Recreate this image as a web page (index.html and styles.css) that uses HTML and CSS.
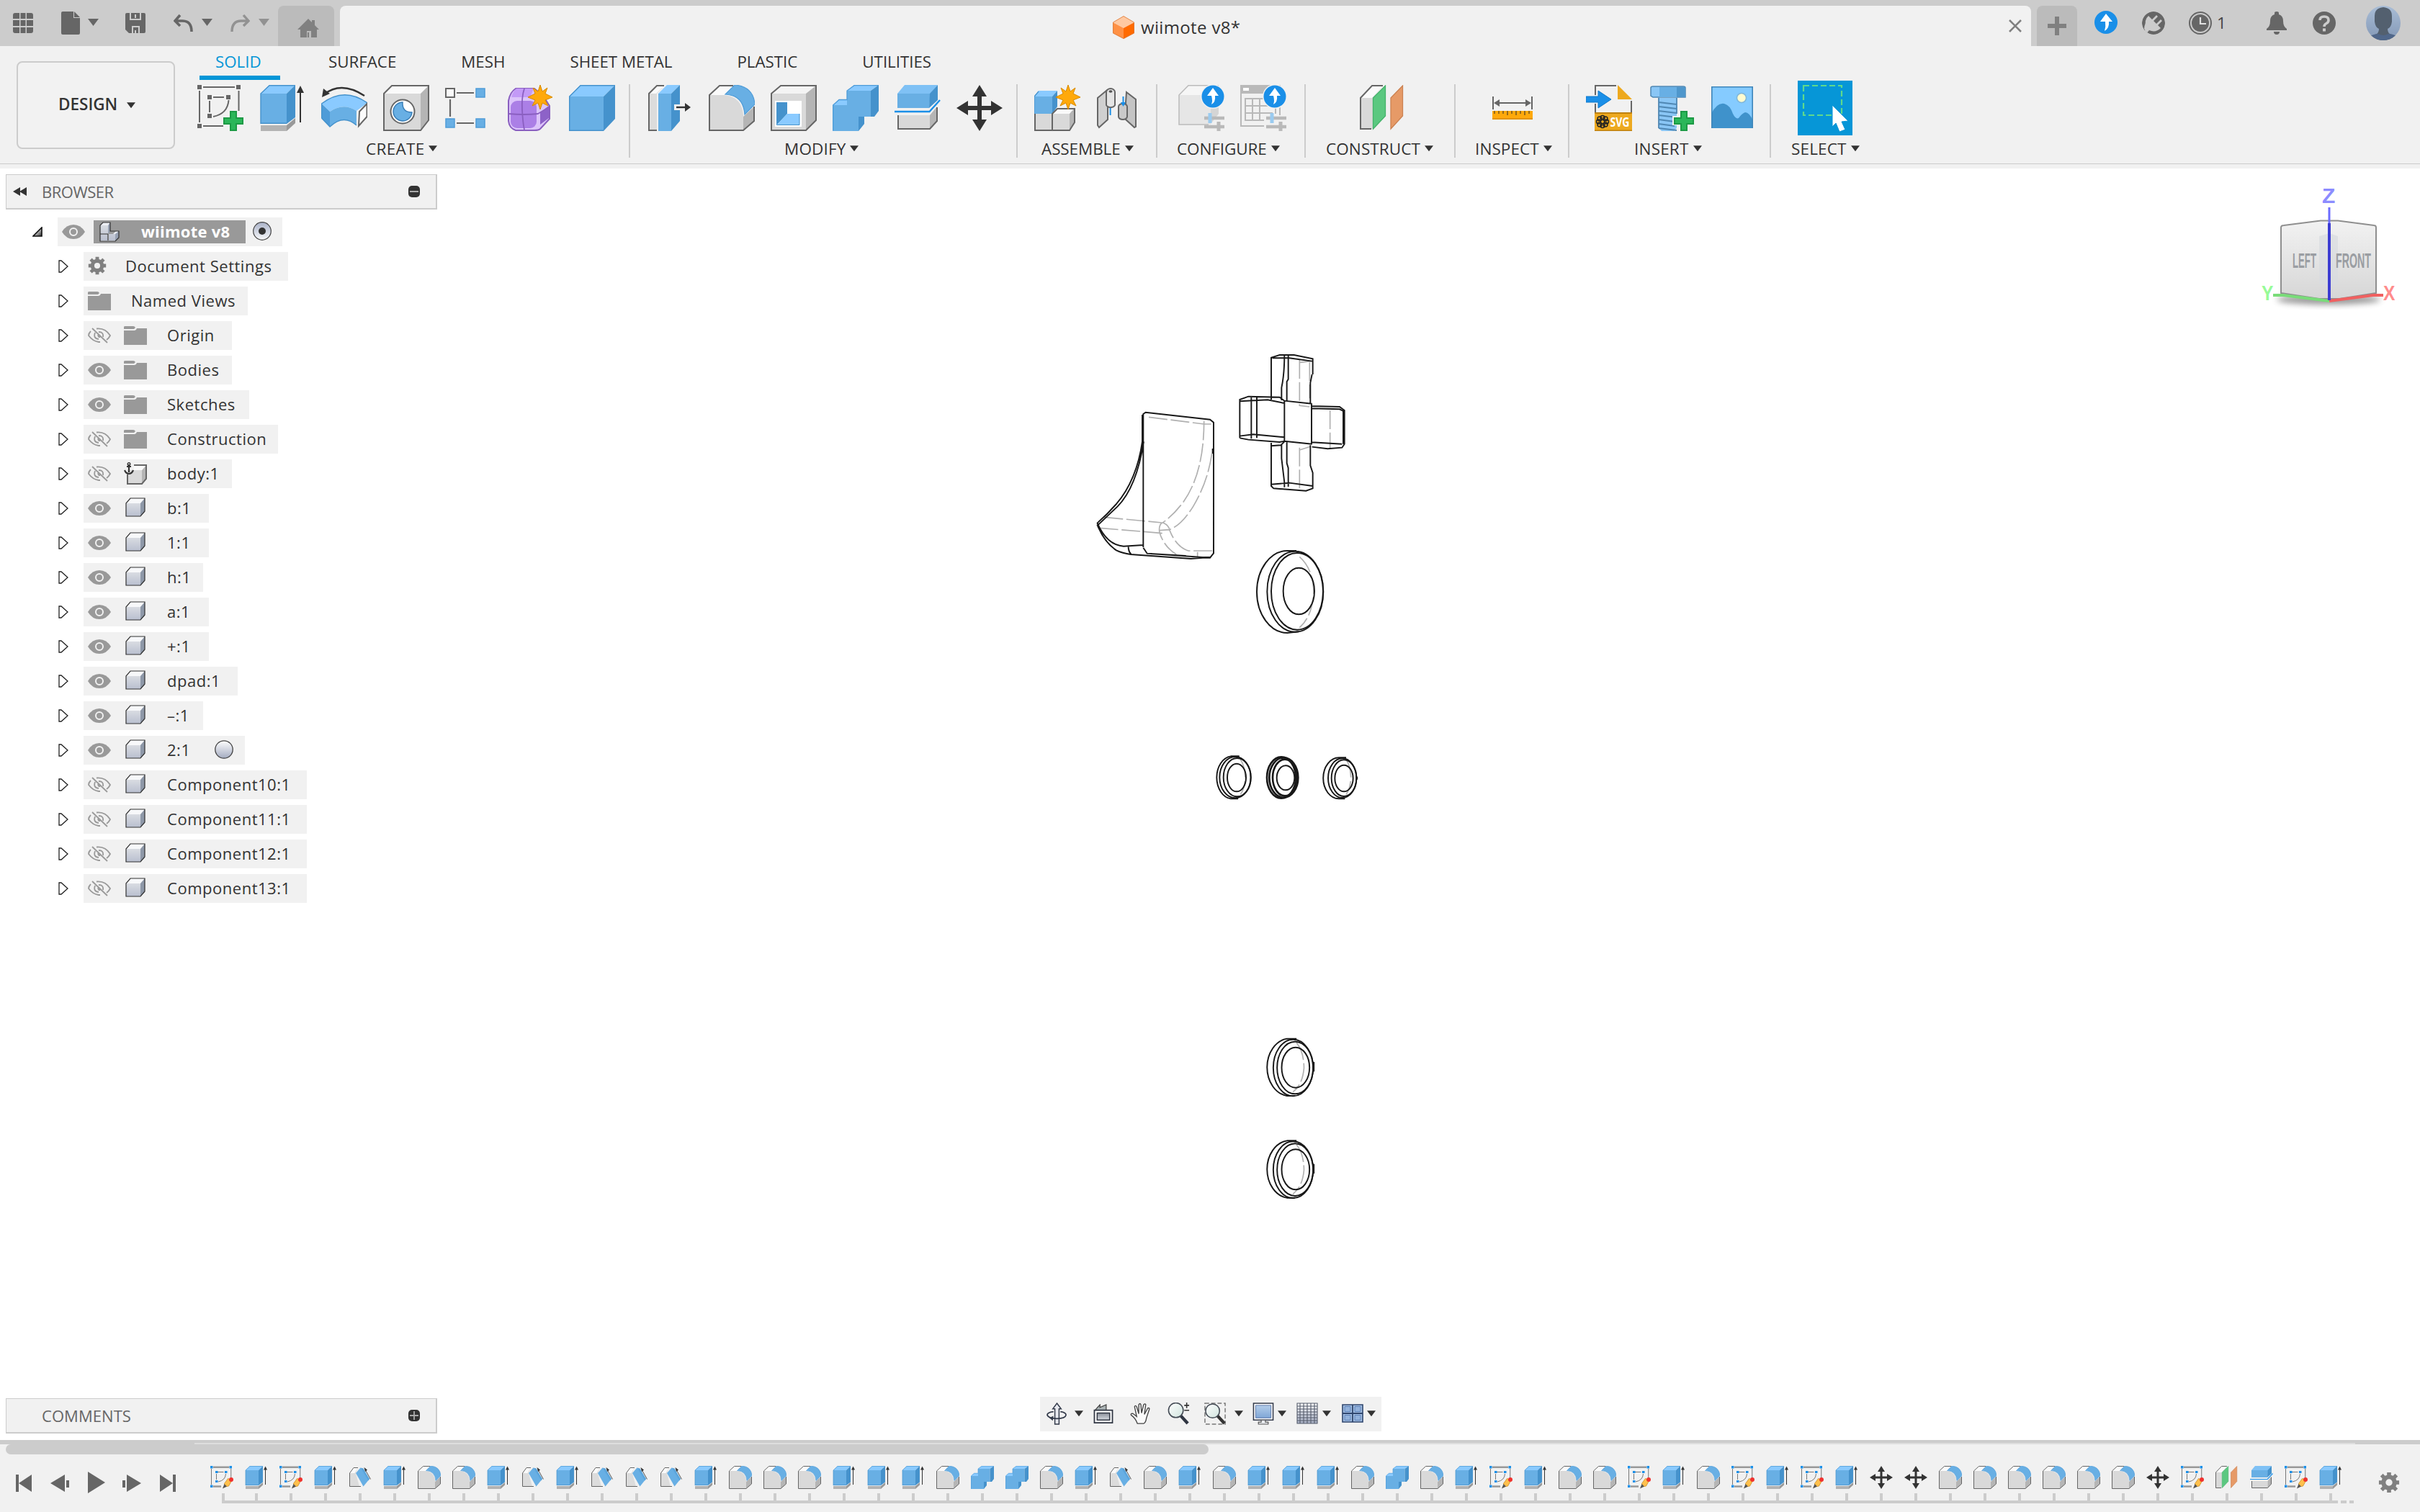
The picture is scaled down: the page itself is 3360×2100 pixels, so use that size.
FILE: index.html
```html
<!DOCTYPE html>
<html lang="en">
<head>
<meta charset="utf-8">
<title>wiimote v8*</title>
<link rel="stylesheet" href="styles.css">
</head>
<body>
<svg class="defs" aria-hidden="true">
  <defs>
    <linearGradient id="g-face" x1="0" y1="0" x2="0" y2="1"><stop offset="0" stop-color="#d9dce2"/><stop offset="1" stop-color="#b9bfcf"/></linearGradient>
    <linearGradient id="g-ball" x1="0" y1="0" x2="0" y2="1"><stop offset="0" stop-color="#fff"/><stop offset="1" stop-color="#a3abc0"/></linearGradient>
    <linearGradient id="g-ring" x1="0" y1="0" x2="0" y2="1"><stop offset="0" stop-color="#aab2c8"/><stop offset="1" stop-color="#f8f9fb"/></linearGradient>
    <linearGradient id="g-open" x1="0" y1="0" x2="1" y2="1"><stop offset="0.3" stop-color="#fff"/><stop offset="0.9" stop-color="#444"/></linearGradient>
    <linearGradient id="g-glass" x1="0" y1="0" x2="1" y2="1"><stop offset="0" stop-color="#fff"/><stop offset="1" stop-color="#cfe3dd"/></linearGradient>
    <linearGradient id="g-dark" x1="0" y1="0" x2="0" y2="1"><stop offset="0" stop-color="#8b909b"/><stop offset="1" stop-color="#d5d9e0"/></linearGradient>
    <linearGradient id="g-cube" x1="0" y1="0" x2="0" y2="1"><stop offset="0" stop-color="#f2f2f2"/><stop offset="1" stop-color="#d6d6d6"/></linearGradient>
    <linearGradient id="g-avatar" x1="0" y1="0" x2="0" y2="1"><stop offset="0" stop-color="#a9bdd6"/><stop offset="1" stop-color="#8398b6"/></linearGradient>
    <linearGradient id="g-screen" x1="0" y1="0" x2="0" y2="1"><stop offset="0" stop-color="#b4cdea"/><stop offset="1" stop-color="#7fa6d6"/></linearGradient>
    <filter id="soft" x="-20%" y="-50%" width="140%" height="200%"><feGaussianBlur stdDeviation="4"/></filter>
  </defs>

  <symbol id="i-star" viewBox="0 0 34 34"><path d="M17 0l3 9 7-5-3 8 10 5-10 4 4 8-8-4-3 9-3-9-8 4 4-8L0 17l10-5-3-8 7 5z" fill="#ffa90b" stroke="#d98a00"/></symbol>
  <symbol id="i-plus" viewBox="0 0 28 28"><path d="M10 1h8v9h9v8h-9v9h-8v-9H1v-8h9z" fill="#2bb659" stroke="#1c9a45" stroke-width="2"/></symbol>

  <symbol id="i-newsketch" viewBox="0 0 64 64">
    <path d="M0 0h6v6H0zM54 0h6v6h-6zM0 54h6v6H0zM14 14h6v6h-6zM40 14h6v6h-6zM14 40h6v6h-6z" fill="#666"/>
    <path d="M8 3h44M3 8v44M57.500 8v28M8 57h28M22 17h15M17 22v16M43.500 21Q42 40 22 44" fill="none" stroke="#666" stroke-width="2"/>
    <use href="#i-plus" x="36" y="36" width="28" height="28"/>
  </symbol>
  <symbol id="i-s" viewBox="0 0 64 64">
    <path d="M8 3.500h44M8 57h22" stroke="#999" stroke-width="5"/>
    <path d="M3 8v44M57.500 8v26M19 17h18M17 22v16M43 22Q42 40 22 44" fill="none" stroke="#777" stroke-width="2"/>
    <path d="M0 0h7v7H0zM53 0h7v7h-7zM0 53h7v7H0zM14 14h7v6h-7zM40 14h7v6h-7zM14 40h7v6h-7z" fill="#1a8fe8"/>
    <path d="M39 49l10-14 11 5-9 16-11 2z" fill="#ffc04d" stroke="#c98a1c" stroke-width="1.500"/>
    <path d="M39 50l7 7-12 6z" fill="#555"/><circle cx="58" cy="38" r="6" fill="#f0322e"/>
  </symbol>
  <symbol id="i-e" viewBox="0 0 64 64">
    <path d="M2 12L14 0h36L38 12z" fill="#8acaff"/><path d="M2 12h36v42H2z" fill="#68afe4"/><path d="M38 12L50 0v45L38 54z" fill="#4592cc"/>
    <path d="M2 54V12L14 .800h36M2 53.300h36" fill="none" stroke="#4592cc" stroke-width="1.400"/>
    <path d="M2 56h36v8H2z" fill="#b3b3b3"/><path d="M38 56l12-10v7L38 64z" fill="#999"/>
    <path d="M57 8v44" stroke="#333" stroke-width="2"/><path d="M57 1l5 10H52z" fill="#333"/>
  </symbol>
  <symbol id="i-revolve" viewBox="0 0 64 64">
    <path d="M4 13Q28-6 60 15" fill="none" stroke="#333" stroke-width="2.500"/><path d="M1 17l2-12 9 7z" fill="#333"/>
    <path d="M.500 26Q32 2 64 25L49 36Q31 24 12 37z" fill="#8acaff"/><path d="M.500 26L12 37v21L.500 46z" fill="#4f9cd8"/><path d="M12 37Q31 24 49 36v20Q31 40 12 58z" fill="#68afe4"/>
    <path d="M.500 46V26Q32 2 64 25M.500 46L12 58Q31 40 49 56" fill="none" stroke="#4592cc" stroke-width="1.500"/>
    <path d="M63.500 26v18L52 57l1-20z" fill="#fafafa" stroke="#666" stroke-width="2"/>
  </symbol>
  <symbol id="i-hole" viewBox="0 0 64 64">
    <path d="M1 12L12 1h51L52 12z" fill="#fafafa"/><path d="M1 12h51v51H1z" fill="#d9d9d9"/><path d="M52 12L63 1v48L52 63z" fill="#b5b5b5"/>
    <path d="M1 63V12L12 1h51v48L52 63z" fill="none" stroke="#666" stroke-width="2"/>
    <circle cx="27" cy="37" r="16.500" fill="#fff" stroke="#666" stroke-width="2"/>
    <path d="M27 24Q26 38 40 38A13 13 0 1 1 27 24z" fill="#68afe4" stroke="#3a7fb8" stroke-width="1.500"/>
  </symbol>
  <symbol id="i-pattern" viewBox="0 0 64 64">
    <path d="M1 5h12v12H1z" fill="#fafafa" stroke="#666" stroke-width="2"/>
    <path d="M43 5h12v12H43zM1 47h12v12H1zM43 47h12v12H43z" fill="#68afe4" stroke="#4f9cd8" stroke-width="1.500"/>
    <path d="M16 11h24M7 20v24M16 53h24" stroke="#666" stroke-width="2.200"/>
  </symbol>
  <symbol id="i-form" viewBox="0 0 64 64">
    <path d="M12 5h26l12 10 9 14v18L46 61q-2 2-8 2H12Q3 60 2 50V22Q4 10 12 5z" fill="#dcc4fa" stroke="#8a5fc0" stroke-width="2"/>
    <path d="M13 5h24l-5 12H6Q8 9 13 5z" fill="#c39af7"/><rect x="5" y="22" width="36" height="38" rx="9" fill="#ab7fe6"/><path d="M46 38l12-9v17L46 55z" fill="#8d62c8"/>
    <path d="M24 5q-4 12-3 30t3 27M2 40q22 2 41 0l15-9" fill="none" stroke="#8a5fc0" stroke-width="1.800"/>
    <use href="#i-star" x="29" y="0" width="34" height="34"/>
  </symbol>
  <symbol id="i-box" viewBox="0 0 64 64">
    <path d="M0 16L16 0h48L48 16z" fill="#8acaff"/><path d="M0 16h48v48H0z" fill="#68afe4"/><path d="M48 16L64 0v47L48 64z" fill="#4592cc"/>
    <path d="M.700 63.300V16L16 .700h48M0 63.300h48" fill="none" stroke="#4592cc" stroke-width="1.400"/>
  </symbol>
  <symbol id="i-presspull" viewBox="0 0 64 64">
    <path d="M3 12L14 1h10L14 12v51H3z" fill="#dcdcdc"/><path d="M3 12L14 1h10L13 12z" fill="#fafafa"/><path d="M14 63H3V12L14 1h10" fill="none" stroke="#666" stroke-width="2"/>
    <path d="M16 12L28 0h18L34 12z" fill="#8acaff"/><path d="M16 12h18v52H16z" fill="#68afe4"/><path d="M34 12L46 0v50L34 64z" fill="#4592cc"/>
    <path d="M38 31h14" stroke="#f1f1f1" stroke-width="8"/><path d="M41 31h14" stroke="#333" stroke-width="2.400"/><path d="M53 25l8 6-8 6z" fill="#333"/>
  </symbol>
  <symbol id="i-f" viewBox="0 0 64 64">
    <path d="M1 14L15 1h20L22 14z" fill="#fafafa"/><path d="M1 14h20Q46 16 48 42v21H1z" fill="#d9d9d9"/><path d="M48 44l15-14v20L48 63z" fill="#b5b5b5"/>
    <path d="M34 1H15L1 14v49h47l15-13V30" fill="none" stroke="#666" stroke-width="2"/>
    <path d="M23 13L36 0Q62 2 64 27L50 41Q48 14 23 13z" fill="#68afe4" stroke="#4f9cd8" stroke-width="1.200"/>
  </symbol>
  <symbol id="i-shell" viewBox="0 0 64 64">
    <path d="M1 12L14 1h49L49 12z" fill="#f4f4f4"/><path d="M1 12h48v51H1z" fill="#d9d9d9"/><path d="M49 12L63 1v48L49 63z" fill="#b5b5b5"/>
    <path d="M1 63V12L14 1h49v48L49 63z" fill="none" stroke="#666" stroke-width="2"/>
    <path d="M6 22h37v36H6z" fill="#fff"/><path d="M8 24h15v16L8 56z" fill="#4592cc"/><path d="M8 56l15-16h17v16z" fill="#8acaff"/><path d="M8.500 24v31.500H40V40" fill="none" stroke="#4592cc"/>
  </symbol>
  <symbol id="i-c" viewBox="0 0 64 64">
    <path d="M0 28h20V8h33v36H36v20H0z" fill="#68afe4"/><path d="M0 28l9-8h11v8zM20 8l10-8h34L53 8z" fill="#8acaff"/>
    <path d="M53 8L64 0v36l-6 8H44v10l-8 10V44h17z" fill="#4592cc"/><path d="M.700 63.300V28L9 20.500h11V8L30 .700h34" fill="none" stroke="#4f9cd8" stroke-width="1.300"/>
  </symbol>
  <symbol id="i-split" viewBox="0 0 64 64">
    <path d="M4 12L14 0h46L50 12z" fill="#7fc1f5"/><path d="M4 12h46L48 32H4z" fill="#68afe4"/><path d="M49 12L60 0v21L48 32z" fill="#4592cc"/>
    <path d="M0 37h48.500L63 21" fill="none" stroke="#1a8fe8" stroke-width="2.400"/>
    <path d="M5 42h44v19H5z" fill="#d9d9d9"/><path d="M49 42l10-12v19L49 61z" fill="#b5b5b5"/><path d="M5 42v19h44l10-11V31" fill="none" stroke="#666" stroke-width="2"/>
  </symbol>
  <symbol id="i-m" viewBox="0 0 64 64"><path d="M32 0l10 16h-7v13h13v-7l16 10-16 10v-7H35v13h7L32 64 22 48h7V35H16v7L0 32l16-10v7h13V16h-7z" fill="#333"/></symbol>
  <symbol id="i-component" viewBox="0 0 64 64">
    <path d="M0 16l6-8h26l-7 8z" fill="#8acaff"/><path d="M0 16h25v24H0z" fill="#68afe4"/><path d="M25 16l7-8v22l-7 10z" fill="#4592cc"/>
    <path d="M1 40h24v23H1zM25 40h24v23H25z" fill="#d9d9d9"/><path d="M25 40l7-8h24l-7 8z" fill="#fafafa"/><path d="M49 40l7-8v20l-7 11z" fill="#b5b5b5"/>
    <path d="M1 40v23h48l7-11V33H32l-7 7v23" fill="none" stroke="#666" stroke-width="2"/><path d="M0 40V16l6-7" fill="none" stroke="#4592cc" stroke-width="1.300"/>
    <use href="#i-star" x="30" y="0" width="34" height="34"/>
  </symbol>
  <symbol id="i-joint" viewBox="0 0 64 64">
    <path d="M14 8L2 18v38l2 3 12-11V24z" fill="#d0d0d0" stroke="#666" stroke-width="2"/><path d="M42 10l13 10v38l-2 1-12-11V24z" fill="#c4c4c4" stroke="#666" stroke-width="2"/>
    <path d="M14 10a6 5 0 0 1 12 0v16a6 4 0 0 1-12 2z" fill="#e4e4e4" stroke="#666" stroke-width="2"/><ellipse cx="20" cy="9" rx="2.500" ry="1.800" fill="#555"/>
    <path d="M31 30a6 4 0 0 1 12 0v14a6 4 0 0 1-12 0z" fill="#c9c9c9" stroke="#666" stroke-width="2"/>
    <path d="M19.600 32v10M37.500 16v12" stroke="#1a8fe8" stroke-width="2"/><path d="M34 24h7l-3.500 6z" fill="#1a8fe8"/>
  </symbol>
  <symbol id="i-config" viewBox="0 0 64 64">
    <path d="M36 46h28M36 58h28" stroke="#b9b9b9" stroke-width="4.500"/><path d="M56 51v13" stroke="#b9b9b9" stroke-width="5"/><path d="M44 39v14" stroke="#9acbf0" stroke-width="5"/>
    <circle cx="48" cy="16" r="17" fill="#f1f1f1"/><circle cx="48" cy="16" r="15.500" fill="#1a8fe8"/><path d="M48 4l8 11h-5q1 9-5 12 2-5 0-12h-6z" fill="#fff"/>
  </symbol>
  <symbol id="i-confdesign" viewBox="0 0 64 64">
    <path d="M1 14L14 1h42L46 14z" fill="#f6f6f6"/><path d="M1 14h44v41H1z" fill="#e6e6e6"/><path d="M45 14L56 2v38L45 54z" fill="#d5d5d5"/><path d="M42 55H1V14L14 .700h42" fill="none" stroke="#bbb" stroke-width="1.500"/>
    <use href="#i-config" width="64" height="64"/>
  </symbol>
  <symbol id="i-conftable" viewBox="0 0 64 64">
    <path d="M0 0h56v12H0z" fill="#b9b9b9"/><path d="M4 4h8v4H4z" fill="#fff"/><path d="M1 8v49h32M55 30v12" fill="none" stroke="#b9b9b9" stroke-width="2"/>
    <path d="M7 19h42M7 29h42M7 39h38M7 49h26M7 18v32M17 18v32M27 18v32M49 30v10" fill="none" stroke="#b9b9b9" stroke-width="2"/>
    <use href="#i-config" width="64" height="64"/>
  </symbol>
  <symbol id="i-p" viewBox="0 0 64 64">
    <path d="M1 18L17 1h15L18 18v43H1z" fill="#d9d9d9"/><path d="M1 18L17 1h15L17 18z" fill="#fafafa"/><path d="M16 61H1V18L17 1h15" fill="none" stroke="#666" stroke-width="2"/>
    <path d="M18.500 18L35.500 1v42L18.500 61z" fill="#5bc880" stroke="#44b36b" stroke-width="1.300"/><path d="M43 18L59.500 1v42L43 61z" fill="#e69a67" stroke="#cc8150" stroke-width="1.300"/>
  </symbol>
  <symbol id="i-measure" viewBox="0 0 64 64">
    <path d="M5 16v18M59 16v18M8 25h48" stroke="#666" stroke-width="2"/><path d="M6 25l8-5v10zM58 25l-8-5v10z" fill="#666"/>
    <path d="M4 36h56v12H4z" fill="#ffa90b"/><path d="M4 47h56" stroke="#e29300" stroke-width="2"/><path d="M7 36v4M13 36v4M19 36v4M25 36v6M31 36v4M37 36v6M43 36v4M49 36v6M55 36v4" stroke="#7a5a1e" stroke-width="1.600"/>
  </symbol>
  <symbol id="i-screw" viewBox="0 0 64 64">
    <path d="M15 18h25v42l-4 4H19l-4-4z" fill="#8ac6f5"/><path d="M4 4q0-2 3-2h42q3 0 3 2v13H7l-3-2z" fill="#8ac6f5" stroke="#4f87b3" stroke-width="1.500"/><path d="M16 3h24v14H16z" fill="#68afe4"/><path d="M40 3h12v14H40z" fill="#4f97cc"/>
    <path d="M15 24l25 3M15 30l25 3M15 36l25 3M15 42l25 3M15 48l22 3M15 54l22 3M15 60l25 3M15 18v42M40 18v22" stroke="#4f87b3" stroke-width="1.800"/>
    <path d="M34 43h10v-9h12v9h8v13h-8v8H44v-8H34z" fill="#f1f1f1"/><use href="#i-plus" x="36" y="36" width="28" height="28"/>
  </symbol>
  <symbol id="i-image" viewBox="0 0 64 64">
    <path d="M2 2h58v58H2z" fill="#85cbff"/><path d="M2 40q8-16 18-14 8 2 12 14 4 8 8 6 4-6 9-8 6 0 11 12v10H2z" fill="#3f92cb"/><circle cx="44" cy="18" r="6.500" fill="#fffbd0" stroke="#7fb6d8" stroke-width="1.500"/>
    <path d="M2.800 60V2.800h56.400V60" fill="none" stroke="#3f86ba" stroke-width="1.600"/>
  </symbol>
  <symbol id="i-select" viewBox="0 0 76 76">
    <path d="M0 0h76v76H0z" fill="#0696d7"/><path d="M8 7h53v41H8z" fill="none" stroke="#5fd98c" stroke-width="2.200" stroke-dasharray="8 4"/>
    <path d="M48 34l22 22-9 1 5 11-8 3-5-12-5 5z" fill="#fff" stroke="#0696d7"/>
  </symbol>
  <symbol id="i-d" viewBox="0 0 64 64">
    <path d="M3 20L14 5h10l-4 16 10 36H3z" fill="#dcdcdc"/><path d="M3 20L14 5h11l-8 15z" fill="#fafafa"/><path d="M34 57H3V20L14 5h12" fill="none" stroke="#666" stroke-width="2"/>
    <path d="M20 20L33 5l25 31-17 21z" fill="#68afe4"/><path d="M33 5l8 2 17 29-3 5z" fill="#5aa5dd"/>
    <path d="M47 12l14 25" stroke="#444" stroke-width="1.800"/><path d="M43 4l9 7-6 5z" fill="#333"/>
  </symbol>

  <symbol id="i-gear" viewBox="0 0 32 32"><path fill-rule="evenodd" d="M13 1h6v4l3 1 3-3 4 4-3 3 1 3h4v6h-4l-1 3 3 3-4 4-3-3-3 1v4h-6v-4l-3-1-3 3-4-4 3-3-1-3H1v-6h4l1-3-3-3 4-4 3 3 3-1zM16 11a5 5 0 1 0 0 10 5 5 0 0 0 0-10z" fill="#808080"/></symbol>
  <symbol id="i-eye" viewBox="0 0 32 20"><path d="M0 10Q6 0 16 0t16 10Q26 20 16 20T0 10z" fill="#999"/><circle cx="16" cy="10" r="5" fill="#999" stroke="#f1f1f1" stroke-width="2"/></symbol>
  <symbol id="i-eyeoff" viewBox="0 0 32 22"><g fill="none" stroke="#999" stroke-width="1.800"><path d="M4 5Q1 8 1 11q6 8 14 9h2M12 1.500Q24 0 31 11q-2 4-5 6M6 1l21 20M10 7q-3 8 5 9M15 6q7 0 6 7M14 10q1 4 3 3"/></g></symbol>
  <symbol id="i-folder" viewBox="0 0 32 26"><path d="M0 1q0-1 2-1h11q2 0 3 2l-2 2H0zM0 6h15q2 0 3-3h14v23H0z" fill="#999"/></symbol>
  <symbol id="i-cube" viewBox="0 0 28 28"><path d="M1 8L7 1h20l-6 7z" fill="#f7f8fa"/><path d="M1 8h20v18H1z" fill="url(#g-face)"/><path d="M21 8l6-7v19l-6 6z" fill="#8e98a8"/><path d="M1 26V8L7 1h20v18l-6 7z" fill="none" stroke="#333" stroke-width="1.200"/></symbol>
  <symbol id="i-anchorcube" viewBox="0 0 32 32"><path d="M5 11h20v19H5z" fill="#d9d9d9"/><path d="M25 11l6-7v19l-6 7z" fill="#b5b5b5"/><path d="M14 4h17l-6 7H14z" fill="#fafafa"/><path d="M5 17v13h20l6-7V4H14" fill="none" stroke="#666" stroke-width="2"/><path d="M7 3v11M4 6h6M1 11q2 5 6 5t6-5" fill="none" stroke="#333" stroke-width="2.200"/><circle cx="7" cy="2.500" r="1.800" fill="none" stroke="#333" stroke-width="1.400"/></symbol>
  <symbol id="i-assembly" viewBox="0 0 28 28"><path d="M1 5l4-4h10l-2 4v12h6l4-4h4v9l-5 5H1z" fill="#eef0f5"/><path d="M1 5h11v21H1zM13 17h9v9h-9z" fill="url(#g-face)"/><path d="M12 5l3-4v12l-3 4zM22 17l5-4v9l-5 5z" fill="#98a2b4"/><path d="M1 27V5l4-4h10v12h12v9l-5 5zM1 17h11v9" fill="none" stroke="#333" stroke-width="1.200"/></symbol>
  <symbol id="i-caret" viewBox="0 0 12 8"><path d="M0 0h12L6 8z" fill="currentColor"/></symbol>
  <symbol id="i-expand" viewBox="0 0 14 18"><path d="M1 1h3l9 8-9 8H1z" fill="#fff" stroke="#222" stroke-width="1.300"/></symbol>
  <symbol id="i-up" viewBox="0 0 32 32"><circle cx="16" cy="16" r="16" fill="#1a8fe8"/><path d="M16 4l9 11h-5q1 9-6 13 2-6 1-13H8z" fill="#fff"/></symbol>
</svg>

<header class="titlebar">
  <svg class="tb-apps" viewBox="0 0 28 28"><path d="M0 3q0-3 3-3h6v8H0zM10.500 0h7v8h-7zM19 0h6q3 0 3 3v5h-9zM0 10h9v8H0zM10.500 10h7v8h-7zM19 10h9v8h-9zM0 20h9v8H3q-3 0-3-3zM10.500 20h7v8h-7zM19 20h9v5q0 3-3 3h-6z" fill="#666"/></svg>
  <svg class="tb-doc" viewBox="0 0 26 32"><path d="M0 2q0-2 2-2h15v9h9v21q0 2-2 2H2q-2 0-2-2zM18 0l8 8h-8z" fill="#666"/></svg>
  <svg class="tb-caret"><use href="#i-caret"/></svg>
  <svg class="tb-save" viewBox="0 0 28 28"><path fill-rule="evenodd" d="M2 0h4v10h16V0h4q2 0 2 2v24q0 2-2 2h-6v-10H9v10H5l-5-5V2q0-2 2-2zM8 0h12v8H8zM13 2v5h2V2zM11 20h7v8h-3v-4h-2v4h-2z" fill="#666"/></svg>
  <svg class="tb-undo" viewBox="0 0 28 26"><path d="M9 2L2 10l7 7M2 10h10q13 0 13 15" fill="none" stroke="#666" stroke-width="3.600"/></svg>
  <svg class="tb-caret"><use href="#i-caret"/></svg>
  <svg class="tb-redo" viewBox="0 0 28 26"><path d="M19 2l7 8-7 7M26 10H16Q3 10 3 25" fill="none" stroke="#929292" stroke-width="3.400"/></svg>
  <svg class="tb-caret dim"><use href="#i-caret"/></svg>
  <div class="tab home"><svg viewBox="0 0 30 26"><path d="M15 0l5 5V2h4v7l6 6h-3v11h-8v-9h-6v9H4V15H0zM14 19h2v7h-2z" fill="#808080"/></svg></div>
  <div class="tab doc">
    <svg class="doc-icon" viewBox="0 0 30 32"><path d="M15 0l15 9-15 8L0 9z" fill="#ffc9a1"/><path d="M0 9l15 8v15L0 24z" fill="#ff9145"/><path d="M30 9l-15 8v15l15-8z" fill="#ff6a00"/><path d="M15 .500l14.500 8.500v15L15 31.500.500 24V9z" fill="none" stroke="#d9783a" stroke-width=".8"/></svg>
    <span>wiimote v8*</span>
    <svg class="close" viewBox="0 0 18 18"><path d="M1 1l16 16M17 1L1 17" stroke="#808080" stroke-width="2.600"/></svg>
  </div>
  <div class="tab add"><svg viewBox="0 0 26 26"><path d="M13 0v26M0 13h26" stroke="#808080" stroke-width="6"/></svg></div>
  <svg class="tb-up"><use href="#i-up"/></svg>
  <svg class="tb-plug" viewBox="0 0 32 32"><circle cx="16" cy="16" r="16" fill="#666"/><path d="M0 32l6-9Q2 12 9 6l5 5 6-6 2 2-6 6 4 4 6-6 2 2-6 6 4 4q-7 7-16 3l-5 6z" fill="#ccc"/><path d="M3 24q1-12 8-10l9 8q-4 6-11 2l-3 4z" fill="#ccc"/></svg>
  <svg class="tb-clock" viewBox="0 0 32 32"><circle cx="16" cy="16" r="15" fill="none" stroke="#666" stroke-width="2"/><circle cx="16" cy="16" r="12" fill="#666"/><path d="M16 8v9h8" fill="none" stroke="#e0e0e0" stroke-width="2.200"/></svg>
  <span class="jobs">1</span>
  <svg class="tb-bell" viewBox="0 0 28 32"><path d="M11 2q0-2 3-2t3 2v2q6 2 6 9 0 8 5 11v2H0v-2q5-3 5-11 0-7 6-9zM10 28h8q0 4-4 4t-4-4z" fill="#666"/></svg>
  <svg class="tb-help" viewBox="0 0 32 32"><circle cx="16" cy="16" r="16" fill="#666"/><path d="M10 12q0-5 6-5t6 5q0 3-3 4.500t-3 4.500" fill="none" stroke="#ccc" stroke-width="3.600"/><path d="M14 23.500h4v4h-4z" fill="#ccc"/></svg>
  <svg class="tb-avatar" viewBox="0 0 48 48"><clipPath id="av"><circle cx="24" cy="24" r="24"/></clipPath><g clip-path="url(#av)"><path d="M0 0h48v48H0z" fill="url(#g-avatar)"/><path d="M12 14q0-11 12-12 12 1 12 12v8q-1 8-6 10 0 7 6 8l12 4v4H0v-4l12-4q6-1 6-8-5-2-6-10z" fill="#53606f"/><path d="M5 42q8-3 12-3 7 4 14 0 5 0 12 3v6H5z" fill="#50678a"/></g></svg>
</header>

<section class="ribbon">
  <button class="workspace">DESIGN<svg class="caret"><use href="#i-caret"/></svg></button>
  <div class="ribbon-main">
    <nav class="ribbon-tabs">
      <span class="rt active">SOLID</span><span class="rt">SURFACE</span><span class="rt">MESH</span><span class="rt">SHEET METAL</span><span class="rt">PLASTIC</span><span class="rt">UTILITIES</span>
    </nav>
    <div class="groups">
      <div class="group g-create">
        <div class="icons"><svg><use href="#i-newsketch"/></svg><svg><use href="#i-e"/></svg><svg><use href="#i-revolve"/></svg><svg><use href="#i-hole"/></svg><svg><use href="#i-pattern"/></svg><svg><use href="#i-form"/></svg><svg><use href="#i-box"/></svg></div>
        <div class="label">CREATE<svg class="caret"><use href="#i-caret"/></svg></div>
      </div>
      <div class="group g-modify">
        <div class="icons"><svg><use href="#i-presspull"/></svg><svg><use href="#i-f"/></svg><svg><use href="#i-shell"/></svg><svg><use href="#i-c"/></svg><svg><use href="#i-split"/></svg><svg><use href="#i-m"/></svg></div>
        <div class="label">MODIFY<svg class="caret"><use href="#i-caret"/></svg></div>
      </div>
      <div class="group g-assemble">
        <div class="icons"><svg><use href="#i-component"/></svg><svg><use href="#i-joint"/></svg></div>
        <div class="label">ASSEMBLE<svg class="caret"><use href="#i-caret"/></svg></div>
      </div>
      <div class="group g-configure">
        <div class="icons"><svg><use href="#i-confdesign"/></svg><svg><use href="#i-conftable"/></svg></div>
        <div class="label">CONFIGURE<svg class="caret"><use href="#i-caret"/></svg></div>
      </div>
      <div class="group g-construct">
        <div class="icons"><svg><use href="#i-p"/></svg></div>
        <div class="label">CONSTRUCT<svg class="caret"><use href="#i-caret"/></svg></div>
      </div>
      <div class="group g-inspect">
        <div class="icons"><svg><use href="#i-measure"/></svg></div>
        <div class="label">INSPECT<svg class="caret"><use href="#i-caret"/></svg></div>
      </div>
      <div class="group g-insert">
        <div class="icons">
          <svg viewBox="0 0 64 64">
            <path d="M13 14V1h29M13 26v13M63 22v17" fill="none" stroke="#666" stroke-width="2"/><path d="M44 0l20 20H44z" fill="#eda91f"/>
            <path d="M0 16h17V8l18 12-18 12v-8H0z" fill="#1a8fe8" stroke="#0f78c9"/>
            <path d="M12 38h52v26H12z" fill="#eda91f"/><path d="M12 39h52M12 63.300h52" stroke="#bf8210" stroke-width="1.800"/>
            <g fill="none" stroke="#222" stroke-width="1.500"><circle cx="23" cy="45.500" r="3"/><circle cx="23" cy="56.500" r="3"/><circle cx="17.500" cy="51" r="3"/><circle cx="28.500" cy="51" r="3"/><circle cx="19" cy="47" r="3"/><circle cx="27" cy="47" r="3"/><circle cx="19" cy="55" r="3"/><circle cx="27" cy="55" r="3"/></g>
            <text class="filetype" transform="translate(33.500 57.700) scale(.78 1)">SVG</text>
          </svg>
          <svg><use href="#i-screw"/></svg><svg><use href="#i-image"/></svg></div>
        <div class="label">INSERT<svg class="caret"><use href="#i-caret"/></svg></div>
      </div>
      <div class="group g-select">
        <div class="icons"><svg class="big"><use href="#i-select"/></svg></div>
        <div class="label">SELECT<svg class="caret"><use href="#i-caret"/></svg></div>
      </div>
    </div>
  </div>
</section>

<main class="workarea">
  <svg class="scene" viewBox="0 234 3360 1766">
    <g class="wire" transform="translate(1500 470) scale(.33333)">
      <g class="hidden-edge">
        <path d="M285 328L515 357H550M515 345Q515 560 430 680 390 735 340 770M548 480Q530 600 470 700 420 780 370 797L330 800M100 745L340 768M80 790L345 812M340 768Q325 780 330 810 350 870 400 900M345 768Q370 780 372 800 400 870 450 885H550M488 890V912"/>
        <path d="M913 90V280L955 285M1040 300V460M913 455V635M915 100L960 95M913 465L960 450M955 100V250"/>
        <path d="M913 910Q970 960 972 1060 965 1160 913 1205"/>
      </g>
      <path d="M262 870V315L272 308 540 338 555 350V895L540 914 278 896 262 872M258 318V430Q235 590 150 690 110 735 70 770M264 430Q234 620 155 700L76 775M70 768Q110 862 180 866L262 861M70 776Q100 850 150 883 175 895 210 900L460 918 540 912M200 866Q200 890 212 900M290 897L440 906M551 459V480"/>
      <path d="M795 255V80L830 69H890L968 85V150M850 69Q850 150 838 205V258M866 69V170L860 180V262M800 82L870 82 965 95M965 150L958 185V272M664 415V255L700 242 830 245 850 260 965 272M664 262L780 256 850 270M712 245V418M735 245V415M664 415L700 422 830 432 850 428 965 440M664 407L720 400 850 412M850 258V430M963 272V440M965 282L1080 285 1100 300V440L1090 455 1030 460 965 452M965 292L1080 295 1095 303V440M965 433L1090 440M795 435V615L805 625 940 635 968 625V560L958 530V445M795 448L835 445 850 430M838 440V500L850 600V620M860 430V520L866 540V618M795 608L870 602 968 615"/>
      <path d="M900 885H862A127 171 0 0 0 862 1227L910 1222"/><ellipse cx="895" cy="1055" rx="117" ry="168"/><ellipse cx="903" cy="1054" rx="108" ry="160"/><ellipse cx="910" cy="1053" rx="65" ry="97"/>
    </g>
    <g class="wire" transform="translate(1659 1020) scale(.33333)">
      <g class="hidden-edge"><path d="M190 105Q208 130 210 180 208 225 190 250M630 105Q648 130 650 180 648 225 630 250"/></g>
      <path d="M185 91H150A66 89 0 0 0 150 268H180M630 97H600A65 85 0 0 0 600 268H625"/>
      <ellipse cx="168" cy="179" rx="65" ry="86"/><ellipse cx="176" cy="179" rx="57" ry="80"/><ellipse cx="174" cy="180" rx="39" ry="58"/>
      <g stroke-width="8"><ellipse cx="360" cy="180" rx="60" ry="86"/><ellipse cx="370" cy="180" rx="60" ry="83"/><ellipse cx="375" cy="180" rx="51" ry="76"/></g><ellipse cx="378" cy="181" rx="37" ry="51"/>
      <ellipse cx="614" cy="182" rx="59" ry="82"/><ellipse cx="621" cy="182" rx="52" ry="76"/><ellipse cx="621" cy="183" rx="38" ry="55"/><path d="M675 176v12" stroke-width="7"/>
    </g>
    <g class="wire" transform="translate(1728.500 1420) scale(.33333)">
      <g id="btn">
        <path class="hidden-edge" d="M215 85Q245 120 246 190 240 260 200 290"/>
        <path d="M215 68H175A95 120 0 0 0 175 306H208"/><ellipse cx="201" cy="189" rx="83" ry="118"/><ellipse cx="209" cy="189" rx="75" ry="109"/><ellipse cx="211" cy="188" rx="58" ry="84"/><path d="M286 165V205" stroke-width="8"/>
      </g>
      <use href="#btn" y="425"/>
    </g>
    <g class="viewcube">
      <ellipse cx="3233" cy="416" rx="72" ry="7" fill="#000" opacity=".4" filter="url(#soft)"/>
      <path d="M3167 313Q3198 310 3234 306V416L3171 410Q3167 409 3167 405z" fill="url(#g-cube)"/><path d="M3299 313Q3268 310 3234 306V416L3295 410Q3299 409 3299 405z" fill="url(#g-cube)"/>
      <path d="M3220 328l14-4 12 4v66l-12 4-14-4z" fill="#d9dbe0" opacity=".7"/>
      <path d="M3167 407V316Q3167 313 3171 313L3222 306.500H3246L3296 313Q3299 313 3299 316V407L3248 415H3220z" fill="none" stroke="#8f8f8f" stroke-width="2"/>
      <path d="M3156 410H3170L3234 418" fill="none" stroke="#79dc79" stroke-width="4"/><path d="M3234 418L3295 410H3309" fill="none" stroke="#f06060" stroke-width="4"/>
      <path d="M3234 288V312" stroke="#6c6cff" stroke-width="3"/><path d="M3234 310V417" stroke="#3c3cd2" stroke-width="4"/>
      <g class="axis"><text transform="translate(3224 282)" fill="#8c8cff">Z</text><text transform="translate(3140 417) scale(.82 1)" fill="#98fb98">Y</text><text transform="translate(3309 417) scale(.82 1)" fill="#ff8c8c">X</text></g>
      <g class="facetext"><text transform="translate(3183 372) scale(.44 1)">LEFT</text><text transform="translate(3243 372) scale(.475 1)">FRONT</text></g>
    </g>
  </svg>

  <aside class="side">
    <div class="panelbar browser"><svg class="rewind" viewBox="0 0 19 12"><path d="M0 6l10-6v12zM9 6l10-6v12z" fill="#333"/></svg><span>BROWSER</span><svg class="toggle" viewBox="0 0 16 16"><rect width="16" height="16" rx="5" fill="#333"/><path d="M2 8h12" stroke="#aaa" stroke-width="2"/></svg></div>
    <ul class="tree">
      <li class="root"><svg class="open" viewBox="0 0 14 14"><path d="M13 1v12H1z" fill="url(#g-open)" stroke="#111" stroke-width="1.600"/></svg><div class="chip"><svg class="eye"><use href="#i-eye"/></svg><div class="selected"><svg viewBox="0 0 28 28"><use href="#i-assembly"/></svg><b>wiimote v8</b></div><svg class="radio" viewBox="0 0 26 26"><circle cx="13" cy="13" r="12.300" fill="url(#g-ring)" stroke="#444" stroke-width="1.200"/><circle cx="13" cy="13" r="5" fill="#333"/></svg></div></li>
      <li><svg class="exp"><use href="#i-expand"/></svg><div class="chip w284"><svg class="gear"><use href="#i-gear"/></svg><span>Document Settings</span></div></li>
      <li><svg class="exp"><use href="#i-expand"/></svg><div class="chip w228"><svg class="folder"><use href="#i-folder"/></svg><span>Named Views</span></div></li>
      <li><svg class="exp"><use href="#i-expand"/></svg><div class="chip w206"><svg class="eyeoff"><use href="#i-eyeoff"/></svg><svg class="folder"><use href="#i-folder"/></svg><span>Origin</span></div></li>
      <li><svg class="exp"><use href="#i-expand"/></svg><div class="chip w206"><svg class="eye"><use href="#i-eye"/></svg><svg class="folder"><use href="#i-folder"/></svg><span>Bodies</span></div></li>
      <li><svg class="exp"><use href="#i-expand"/></svg><div class="chip w230"><svg class="eye"><use href="#i-eye"/></svg><svg class="folder"><use href="#i-folder"/></svg><span>Sketches</span></div></li>
      <li><svg class="exp"><use href="#i-expand"/></svg><div class="chip w270"><svg class="eyeoff"><use href="#i-eyeoff"/></svg><svg class="folder"><use href="#i-folder"/></svg><span>Construction</span></div></li>
      <li><svg class="exp"><use href="#i-expand"/></svg><div class="chip w206"><svg class="eyeoff"><use href="#i-eyeoff"/></svg><svg class="anchor"><use href="#i-anchorcube"/></svg><span>body:1</span></div></li>
      <li><svg class="exp"><use href="#i-expand"/></svg><div class="chip w174"><svg class="eye"><use href="#i-eye"/></svg><svg class="cube"><use href="#i-cube"/></svg><span>b:1</span></div></li>
      <li><svg class="exp"><use href="#i-expand"/></svg><div class="chip w174"><svg class="eye"><use href="#i-eye"/></svg><svg class="cube"><use href="#i-cube"/></svg><span>1:1</span></div></li>
      <li><svg class="exp"><use href="#i-expand"/></svg><div class="chip w166"><svg class="eye"><use href="#i-eye"/></svg><svg class="cube"><use href="#i-cube"/></svg><span>h:1</span></div></li>
      <li><svg class="exp"><use href="#i-expand"/></svg><div class="chip w174"><svg class="eye"><use href="#i-eye"/></svg><svg class="cube"><use href="#i-cube"/></svg><span>a:1</span></div></li>
      <li><svg class="exp"><use href="#i-expand"/></svg><div class="chip w174"><svg class="eye"><use href="#i-eye"/></svg><svg class="cube"><use href="#i-cube"/></svg><span>+:1</span></div></li>
      <li><svg class="exp"><use href="#i-expand"/></svg><div class="chip w214"><svg class="eye"><use href="#i-eye"/></svg><svg class="cube"><use href="#i-cube"/></svg><span>dpad:1</span></div></li>
      <li><svg class="exp"><use href="#i-expand"/></svg><div class="chip w166"><svg class="eye"><use href="#i-eye"/></svg><svg class="cube"><use href="#i-cube"/></svg><span>–:1</span></div></li>
      <li><svg class="exp"><use href="#i-expand"/></svg><div class="chip w224"><svg class="eye"><use href="#i-eye"/></svg><svg class="cube"><use href="#i-cube"/></svg><span>2:1</span><svg class="ball" viewBox="0 0 26 26"><circle cx="13" cy="13" r="12.200" fill="url(#g-ball)" stroke="#444" stroke-width="1.300"/></svg></div></li>
      <li><svg class="exp"><use href="#i-expand"/></svg><div class="chip w310"><svg class="eyeoff"><use href="#i-eyeoff"/></svg><svg class="cube"><use href="#i-cube"/></svg><span>Component10:1</span></div></li>
      <li><svg class="exp"><use href="#i-expand"/></svg><div class="chip w310"><svg class="eyeoff"><use href="#i-eyeoff"/></svg><svg class="cube"><use href="#i-cube"/></svg><span>Component11:1</span></div></li>
      <li><svg class="exp"><use href="#i-expand"/></svg><div class="chip w310"><svg class="eyeoff"><use href="#i-eyeoff"/></svg><svg class="cube"><use href="#i-cube"/></svg><span>Component12:1</span></div></li>
      <li><svg class="exp"><use href="#i-expand"/></svg><div class="chip w310"><svg class="eyeoff"><use href="#i-eyeoff"/></svg><svg class="cube"><use href="#i-cube"/></svg><span>Component13:1</span></div></li>
    </ul>
    <div class="panelbar comments"><span>COMMENTS</span><svg class="toggle" viewBox="0 0 16 16"><rect width="16" height="16" rx="5" fill="#333"/><path d="M2 8h12M8 2v12" stroke="#aaa" stroke-width="1.800"/></svg></div>
  </aside>

  <div class="navbar">
    <svg class="n-orbit" viewBox="0 0 30 32"><path d="M15 1l6 8h-3v22h-6V9H9z" fill="#e6e8ee" stroke="#333a4a" stroke-width="1.500"/><path d="M10 13Q1 14 1 18q2 5 14 5t13-5q0-4-8-5" fill="none" stroke="#333a4a" stroke-width="1.800"/><path d="M10 19l-6 3 5 4z" fill="#333a4a"/></svg>
    <svg class="caret c1"><use href="#i-caret"/></svg>
    <svg class="n-look" viewBox="0 0 28 28"><path d="M2 9L9 1v4l9-4v8z" fill="#aab3b5" stroke="#444" stroke-width="1.300"/><path d="M1 9h26v18H1z" fill="#fff" stroke="#2f3542" stroke-width="1.800"/><path d="M5 13h18v10H5z" fill="url(#g-dark)" stroke="#2f3542" stroke-width="1.500"/></svg>
    <svg class="n-hand" viewBox="0 0 30 32"><path d="M10 30Q7 22 1 18q-1-3 3-2l5 4L6 6q1-3 3 0l3 10L12 3q2-3 3 0l1 12 3-12q2-2 3 0l-2 14 5-9q3-1 2 2l-4 12q-1 7-4 8z" fill="#fafafa" stroke="#444" stroke-width="1.400"/></svg>
    <svg class="n-zoom" viewBox="0 0 32 32"><path d="M19 19l10 11" stroke="#2f3542" stroke-width="4.500"/><circle cx="12" cy="11" r="10.500" fill="url(#g-glass)" stroke="#444b55" stroke-width="1.600"/><path d="M24 4h7M27.500 0v8M24 11h7" stroke="#333" stroke-width="1.600"/></svg>
    <svg class="n-fit" viewBox="0 0 32 32"><path d="M1 1h29v30H1z" fill="none" stroke="#777" stroke-width="1.500" stroke-dasharray="6 3"/><path d="M19 19l10 11" stroke="#333" stroke-width="4.500"/><circle cx="12" cy="12" r="10" fill="url(#g-glass)" stroke="#444b55" stroke-width="1.600"/></svg>
    <svg class="caret c2"><use href="#i-caret"/></svg>
    <svg class="n-disp" viewBox="0 0 30 32"><path d="M1 1h28v24H1z" fill="#fff" stroke="#333a4a" stroke-width="1.600"/><path d="M4 4h22v18H4z" fill="url(#g-screen)" stroke="#5b77a8"/><path d="M12 25h6v3h4v3H8v-3h4z" fill="#e8eaee" stroke="#555" stroke-width="1.200"/></svg>
    <svg class="caret c3"><use href="#i-caret"/></svg>
    <svg class="n-grid" viewBox="0 0 30 30"><path d="M1 1h28v28H1z" fill="url(#g-ball)"/><path d="M1 1h28v28H1zM1 5h28M1 9h28M1 13h28M1 17h28M1 21h28M1 25h28M5 1v28M10 1v28M15 1v28M20 1v28M25 1v28" fill="none" stroke="#555c6c" stroke-width="1.100"/></svg>
    <svg class="caret c4"><use href="#i-caret"/></svg>
    <svg class="n-view" viewBox="0 0 30 26"><path d="M1 1h28v24H1z" fill="#a4bfe2" stroke="#2f466e" stroke-width="1.600"/><path d="M15 1v24M1 13h28" stroke="#2f466e" stroke-width="1.800"/><path d="M4 3.500h8v7H4zM18 3.500h8v7h-8zM4 15.500h8v7H4zM18 15.500h8v7h-8z" fill="#93b2dc" stroke="#5e82b8"/></svg>
    <svg class="caret c5"><use href="#i-caret"/></svg>
  </div>
</main>

<footer class="timeline">
  <div class="rail"></div>
  <div class="scroll"></div>
  <div class="tl-body">
    <svg class="playback" viewBox="0 0 222 30"><path d="M0 4h4v24H0zM22 4v24L4 16zM68 4v24L48 16zM70 12h4v10h-4zM100 0l24 15-24 15zM148 12h4v10h-4zM154 4l20 12-20 12zM200 4l18 12-18 12zM218 4h4v24h-4z" fill="#666"/></svg>
    <ol class="features">
      <li><svg><use href="#i-s"/></svg></li><li><svg><use href="#i-e"/></svg></li><li><svg><use href="#i-s"/></svg></li><li><svg><use href="#i-e"/></svg></li><li><svg><use href="#i-d"/></svg></li><li><svg><use href="#i-e"/></svg></li><li><svg><use href="#i-f"/></svg></li><li><svg><use href="#i-f"/></svg></li><li><svg><use href="#i-e"/></svg></li><li><svg><use href="#i-d"/></svg></li>
      <li><svg><use href="#i-e"/></svg></li><li><svg><use href="#i-d"/></svg></li><li><svg><use href="#i-d"/></svg></li><li><svg><use href="#i-d"/></svg></li><li><svg><use href="#i-e"/></svg></li><li><svg><use href="#i-f"/></svg></li><li><svg><use href="#i-f"/></svg></li><li><svg><use href="#i-f"/></svg></li><li><svg><use href="#i-e"/></svg></li><li><svg><use href="#i-e"/></svg></li>
      <li><svg><use href="#i-e"/></svg></li><li><svg><use href="#i-f"/></svg></li><li><svg><use href="#i-c"/></svg></li><li><svg><use href="#i-c"/></svg></li><li><svg><use href="#i-f"/></svg></li><li><svg><use href="#i-e"/></svg></li><li><svg><use href="#i-d"/></svg></li><li><svg><use href="#i-f"/></svg></li><li><svg><use href="#i-e"/></svg></li><li><svg><use href="#i-f"/></svg></li>
      <li><svg><use href="#i-e"/></svg></li><li><svg><use href="#i-e"/></svg></li><li><svg><use href="#i-e"/></svg></li><li><svg><use href="#i-f"/></svg></li><li><svg><use href="#i-c"/></svg></li><li><svg><use href="#i-f"/></svg></li><li><svg><use href="#i-e"/></svg></li><li><svg><use href="#i-s"/></svg></li><li><svg><use href="#i-e"/></svg></li><li><svg><use href="#i-f"/></svg></li>
      <li><svg><use href="#i-f"/></svg></li><li><svg><use href="#i-s"/></svg></li><li><svg><use href="#i-e"/></svg></li><li><svg><use href="#i-f"/></svg></li><li><svg><use href="#i-s"/></svg></li><li><svg><use href="#i-e"/></svg></li><li><svg><use href="#i-s"/></svg></li><li><svg><use href="#i-e"/></svg></li><li><svg><use href="#i-m"/></svg></li><li><svg><use href="#i-m"/></svg></li>
      <li><svg><use href="#i-f"/></svg></li><li><svg><use href="#i-f"/></svg></li><li><svg><use href="#i-f"/></svg></li><li><svg><use href="#i-f"/></svg></li><li><svg><use href="#i-f"/></svg></li><li><svg><use href="#i-f"/></svg></li><li><svg><use href="#i-m"/></svg></li><li><svg><use href="#i-s"/></svg></li><li><svg><use href="#i-p"/></svg></li><li><svg><use href="#i-split"/></svg></li>
      <li><svg><use href="#i-s"/></svg></li><li><svg><use href="#i-e"/></svg></li>
    </ol>
    <div class="track"><i class="line"></i><i class="dash"></i><i class="dash"></i></div>
    <svg class="tl-gear"><use href="#i-gear"/></svg>
  </div>
</footer>
</body>
</html>
```
FILE: styles.css
```css
* { box-sizing: border-box; }
html, body { margin: 0; height: 100%; }
body {
  display: flex; flex-direction: column;
  width: 3360px; height: 2100px; overflow: hidden;
  background: #fff; color: #333;
  font: 22.500px/30px "Open Sans", "Noto Sans", sans-serif;
}
svg { display: block; flex: none; }
ul, ol { list-style: none; margin: 0; padding: 0; }
.defs { position: absolute; width: 0; height: 0; }

/* Title bar */
.titlebar { display: flex; align-items: center; flex: none; height: 64px; background: #ccc; color: #666; }
.tb-apps { width: 28px; height: 28px; margin-left: 18px; }
.tb-doc { width: 26px; height: 32px; margin-left: 39px; }
.tb-caret { width: 15px; height: 10px; margin-left: 11px; margin-bottom: 3px; }
.tb-caret.dim { color: #929292; margin-left: 12px; }
.tb-save { width: 28px; height: 28px; margin-left: 37px; }
.tb-undo { width: 28px; height: 26px; margin-left: 39px; }
.tb-redo { width: 28px; height: 26px; margin-left: 24px; }
.tab { display: flex; align-items: center; height: 56px; align-self: flex-end; border-radius: 8px 8px 0 0; }
.tab.home { width: 78px; margin-left: 12px; padding: 6px 0 0 27px; background: #bbb; }
.tab.home svg { width: 30px; height: 26px; }
.tab.doc { width: 2348px; margin-left: 8px; background: #f1f1f1; color: #333; font-size: 24px; letter-spacing: .350px; padding-left: 1073px; }
.tab.doc span { margin-left: 9px; margin-top: 3px; }
.doc-icon { width: 30px; height: 32px; margin-top: 4px; }
.close { width: 18px; height: 18px; margin-left: auto; margin-right: 13px; }
.tab.add { width: 56px; margin-left: 8px; background: #bbb; justify-content: center; }
.tab.add svg { width: 26px; height: 26px; }
.tb-up { width: 32px; height: 32px; margin-left: 24px; margin-bottom: 2px; }
.tb-plug { width: 32px; height: 32px; margin-left: 34px; border-radius: 50%; }
.tb-clock { width: 32px; height: 32px; margin-left: 33px; }
.jobs { width: 28px; margin-left: 7px; color: #444; }
.tb-bell { width: 28px; height: 32px; margin-left: 41px; }
.tb-help { width: 32px; height: 32px; margin-left: 36px; }
.tb-avatar { width: 48px; height: 48px; margin-left: 42px; }

/* Ribbon */
.ribbon { display: flex; flex: none; height: 170px; background: #f1f1f1; box-shadow: inset 0 -6px #f1f1f1, inset 0 -7px #ccc; }
.workspace {
  display: flex; align-items: center; width: 220px; height: 122px; margin: 21px 0 0 23px; padding: 0 0 3px 56px;
  border: 2px solid #ccc; border-radius: 8px; background: #f2f2f2; color: #333;
  font: 600 22.500px "Open Sans", sans-serif;
}
.workspace .caret { margin-left: 13px; margin-top: 3px; }
.caret { width: 12px; height: 8.500px; color: #333; }
.ribbon-main { margin-left: 13px; }
.ribbon-tabs { display: flex; height: 47px; gap: 44px; padding-left: 21px; font-size: 22.300px; }
.rt { height: 47px; padding: 7px 23px 0; white-space: nowrap; }
.rt.active { width: 112px; padding: 7px 0 0 22px; color: #0696d7; border-bottom: 6px solid #0696d7; }
.groups { display: flex; margin-top: 6px; height: 102px; }
.group { border-right: 2px solid #ccc; }
.icons { display: flex; gap: 22px; padding-top: 1px; height: 75px; }
.icons svg { width: 64px; height: 64px; }
.icons .big { width: 76px; height: 76px; margin-top: -6px; }
.filetype { font: 700 18px "Open Sans", sans-serif; fill: #fff; }
.label { display: flex; align-items: center; white-space: nowrap; }
.label .caret { margin-left: 6px; margin-top: -2px; }
.g-create { width: 619px; } .g-create .icons { padding-left: 18px; } .g-create .label { padding-left: 252px; letter-spacing: .300px; }
.g-modify { width: 538px; } .g-modify .icons { padding-left: 23px; } .g-modify .label { padding-left: 214px; letter-spacing: .150px; }
.g-assemble { width: 194px; } .g-assemble .icons { padding-left: 23px; } .g-assemble .label { padding-left: 33px; letter-spacing: -.100px; }
.g-configure { width: 206px; } .g-configure .icons { padding-left: 29px; } .g-configure .label { padding-left: 27px; letter-spacing: -.100px; }
.g-construct { width: 208px; } .g-construct .icons { padding-left: 75px; } .g-construct .label { padding-left: 28px; letter-spacing: .100px; }
.g-inspect { width: 158px; } .g-inspect .icons { padding-left: 47px; } .g-inspect .label { padding-left: 27px; letter-spacing: .100px; }
.g-insert { width: 280px; } .g-insert .icons { padding-left: 23px; } .g-insert .label { padding-left: 90px; letter-spacing: .200px; }
.g-select { border: 0; } .g-select .icons { padding-left: 37px; } .g-select .label { padding-left: 28px; letter-spacing: .150px; }

/* Work area */
.workarea { position: relative; display: flex; flex: none; height: 1766px; }
.scene { position: absolute; inset: 0; width: 3360px; height: 1766px; }
.wire { fill: none; stroke: #181818; stroke-width: 5.800; }
.hidden-edge { fill: none; stroke: #b0b0b0; stroke-width: 5; stroke-dasharray: 78 14; }
.axis { font: 700 30px "Liberation Sans", sans-serif; }
.facetext { font: 700 30px "Liberation Sans", sans-serif; fill: #9a9da2; }
.side { position: relative; display: flex; flex-direction: column; width: 599px; margin: 8px 0 9px 8px; font-size: 22px; }
.panelbar {
  display: flex; align-items: center; flex: none; height: 49px; padding-right: 22px;
  background: #f1f1f1; border: solid #ccc; border-width: 1px 2px 2px 1px; color: #666;
}
.rewind { width: 19px; height: 12px; margin-left: 9px; }
.panelbar .toggle { width: 16px; height: 16px; margin-left: auto; }
.browser span { margin-left: 21px; letter-spacing: -.500px; }
.comments { margin-top: auto; }
.comments span { margin-left: 49px; letter-spacing: .050px; }

.tree { display: flex; flex-direction: column; gap: 8px; margin-top: 11px; letter-spacing: .520px; }
.tree li { display: flex; align-items: center; height: 40px; padding-left: 73px; }
.tree .root { padding-left: 37px; }
.tree span, .tree b { margin-top: -2px; }
.exp { width: 14px; height: 18px; margin-right: 21px; }
.open { width: 14px; height: 14px; margin-right: 21px; }
.chip { display: flex; align-items: center; height: 40px; padding-left: 6px; background: #f1f1f1; white-space: nowrap; }
.root .chip { width: 312px; }
.eye { width: 32px; height: 20px; }
.eyeoff { width: 32px; height: 22px; }
.selected { display: flex; align-items: center; width: 211px; height: 32px; margin-left: 12px; padding-left: 8px; background: #999; color: #fff; }
.selected svg { width: 28px; height: 28px; }
.selected b { margin-left: 30px; letter-spacing: .250px; }
.radio { width: 26px; height: 26px; margin: 0 0 3px 10px; }
.gear { width: 26px; height: 26px; margin-bottom: 3px; }
.gear + span { margin-left: 26px; }
.folder { width: 32px; height: 26px; }
.folder + span { margin-left: 28px; }
.eye + .folder, .eyeoff + .folder, .eyeoff + .anchor { margin-left: 18px; }
.cube { width: 28px; height: 28px; margin: 0 3px 2px 20px; }
.cube + span { margin-left: 27px; }
.anchor { width: 32px; height: 32px; }
.anchor + span { margin-left: 28px; }
.ball { width: 26px; height: 26px; margin: 0 0 3px 33px; }
.w166 { width: 166px; } .w174 { width: 174px; } .w206 { width: 206px; } .w214 { width: 214px; }
.w224 { width: 224px; } .w228 { width: 228px; } .w230 { width: 230px; } .w270 { width: 270px; }
.w284 { width: 284px; } .w310 { width: 310px; }

.navbar { position: relative; display: flex; align-items: center; align-self: flex-end; width: 474px; height: 48px; margin: 0 0 12px 837px; padding-bottom: 2px; background: #f1f1f1; }
.n-orbit { width: 29px; height: 31px; margin-left: 9px; }
.n-look { width: 28px; height: 27px; margin-left: 14px; }
.n-hand { width: 30px; height: 31px; margin-left: 23px; }
.n-zoom { width: 31px; height: 31px; margin-left: 22px; }
.n-fit { width: 31px; height: 31px; margin-left: 20px; }
.n-disp { width: 30px; height: 31px; margin-left: 13px; }
.n-grid { width: 30px; height: 30px; margin-left: 14px; }
.n-view { width: 30px; height: 26px; margin-left: 15px; }
.c1 { margin-left: 10px; } .c2 { margin-left: 11px; } .c3 { margin-left: 5px; } .c4 { margin-left: 6px; } .c5 { margin-left: 5px; }

/* Timeline */
.timeline { flex: none; height: 100px; background: #f1f1f1; }
.rail { height: 6px; background: linear-gradient(#dedede, #dedede) 270px 4px / 3000px 2px no-repeat #ccc; }
.scroll { width: 1670px; height: 14px; margin-left: 8px; border-radius: 7px; background: #ccc; }
.tl-body { display: grid; grid-template: 48px 4px / 292px 2976px auto; padding-top: 16px; }
.playback { grid-area: 1 / 1; width: 222px; height: 30px; margin: 8px 0 0 22px; }
.features { grid-area: 1 / 2; display: flex; }
.features li { width: 48px; height: 48px; flex: none; background: linear-gradient(#ccc, #ccc) 14px 38px / 4px 10px no-repeat; }
.features li:first-child { background-position: 16px 38px; }
.features svg { width: 32px; height: 32px; }
.track { grid-area: 2 / 2; display: flex; gap: 4px; padding-left: 16px; height: 4px; }
.line { width: 2940px; background: #ccc; }
.dash { width: 8px; background: #ccc; }
.dash + .dash { width: 6px; }
.tl-gear { grid-area: 1 / 3; width: 30px; height: 30px; margin: 8px 0 0 34px; }
```
